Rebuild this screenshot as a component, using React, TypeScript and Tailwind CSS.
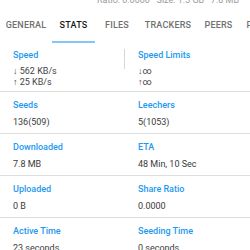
import React from "react"

const tabs = [
  { name: "GENERAL", w: "w-[52px]" },
  { name: "STATS", w: "w-[43px]", active: true },
  { name: "FILES", w: "w-[44px]" },
  { name: "TRACKERS", w: "w-[58px]" },
  { name: "PEERS", w: "w-[43px]" },
  { name: "PIECES", w: "w-[44px]" },
]

const rows = [
  [
    { label: "Seeds", value: "136(509)" },
    { label: "Leechers", value: "5(1053)" },
  ],
  [
    { label: "Downloaded", value: "7.8 MB" },
    { label: "ETA", value: "48 Min, 10 Sec" },
  ],
  [
    { label: "Uploaded", value: "0 B" },
    { label: "Share Ratio", value: "0.0000" },
  ],
  [
    { label: "Active Time", value: "23 seconds" },
    { label: "Seeding Time", value: "0 seconds" },
  ],
]

function Cell({ label, children, divider }: { label: string; children: React.ReactNode; divider?: boolean }) {
  return (
    <div className="relative pl-[13px]">
      {divider && <span className="absolute right-0 top-0 h-[20px] w-px bg-[#d6d6d6]" />}
      <div className="text-[9px] leading-[12px] font-medium text-[#2399f0]">{label}</div>
      {children}
    </div>
  )
}

export default function App() {
  return (
    <div className="w-[250px] h-[250px] overflow-hidden bg-white font-['Roboto',sans-serif]">
      {/* torrent summary, clipped by the window */}
      <div className="h-[8px] overflow-hidden flex justify-end pr-[11px]">
        <div className="-mt-[6px] text-[9px] leading-[12px] text-[#9a9a9a] whitespace-pre">
          Ratio: 0.0000   Size: 1.5 GB   7.8 MB
        </div>
      </div>

      {/* Tabs */}
      <div className="flex h-[35px] whitespace-nowrap">
        {tabs.map((t) => (
          <div
            key={t.name}
            className={`${t.w} shrink-0 flex items-center justify-center relative text-[9px] font-medium tracking-[0.2px] ${
              t.active ? "text-[#1a1a1a]" : "text-[#707070]"
            }`}
          >
            {t.name}
            {t.active && <span className="absolute bottom-0 left-0 right-0 h-[2px] bg-[#86c5f7]" />}
          </div>
        ))}
      </div>

      {/* Speed row */}
      <div className="grid grid-cols-2 border-b border-[#dedede] pt-[6px] pb-[3px]">
        <Cell label="Speed" divider>
          <div className="mt-[5px] text-[9px] leading-[11px] text-[#444]">
            <div>↓ 562 KB/s</div>
            <div>↑ 25 KB/s</div>
          </div>
        </Cell>
        <Cell label="Speed Limits">
          <div className="mt-[5px] text-[9px] leading-[11px] text-[#444]">
            <div>↓∞</div>
            <div>↑∞</div>
          </div>
        </Cell>
      </div>

      {rows.map((row, i) => (
        <div key={i} className="grid grid-cols-2 border-b border-[#dedede] pt-[7px] pb-[5px]">
          {row.map((c) => (
            <Cell key={c.label} label={c.label}>
              <div className="mt-[5px] text-[9px] leading-[12px] text-[#3a3a3a]">{c.value}</div>
            </Cell>
          ))}
        </div>
      ))}
    </div>
  )
}
